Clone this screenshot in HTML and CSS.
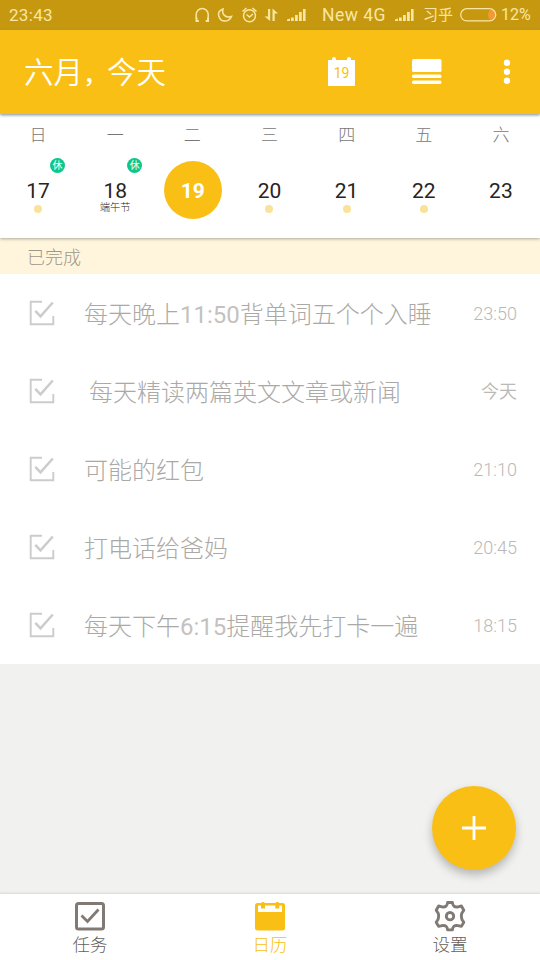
FILE: index.html
```html
<!DOCTYPE html>
<html lang="zh-CN">
<head>
<meta charset="utf-8">
<title>日历</title>
<link rel="stylesheet" href="styles.css">
</head>
<body>
<svg class="defs" width="0" height="0" aria-hidden="true">
  <symbol id="signal" viewBox="0 0 19 14"><path d="M0 13v-1.500l3-1V13zM4 9.500h2.800V13H4zM8 7h2.800v6H8zM12 4h2.800v9H12zM16 1h2.600v12H16z"/></symbol>
  <symbol id="done" viewBox="0 0 26 26"><path d="M13 1.700H1.700v22.600h22.600V16" fill="none" stroke-width="1.900"/><path d="M6.300 10.800l5.200 5.600L23.800 2.500" fill="none" stroke-width="2.500"/></symbol>
</svg>
<div class="app">
  <div class="status">
    <span class="clock">23:43</span>
    <svg class="status-icons" viewBox="0 0 94 18">
      <g fill="none" stroke="#f9e6a4" stroke-width="1.500">
        <path d="M3.200 12.500V8.500a6 6 0 0 1 12 0v4"/>
        <path d="M3.500 11.500v3.500h2.300M15 11.500v3.500h-2.300" stroke-width="2"/>
        <path d="M30 3c-8 3-4 12.500 2.500 12 3-.3 5-2 6-4.500-6 2-10-2.500-8.500-7.500z"/>
        <circle cx="56.500" cy="9.700" r="6"/><path d="M53.500 8.500l3 2.500 3.500-3M49.500 5.500l4-3.500M63.500 5.500l-4-3.500"/>
      </g>
      <path fill="#f9e6a4" d="M75 3h2.200v12L71.500 10.500H75zM79.500 15V2.500l5.500 5h-3.300V15z"/>
    </svg>
    <svg class="bars"><use href="#signal"/></svg>
    <span class="network">New 4G</span>
    <svg class="bars"><use href="#signal"/></svg>
    <span class="carrier">习乎</span>
    <svg class="battery" viewBox="0 0 37 14"><path fill="#f39a36" d="M30 2h1.500a5 5 0 0 1 0 10H30a8 8 0 0 1 0-10z"/><rect x=".7" y=".7" width="35" height="12.200" rx="6.100" fill="none" stroke="#f9e6a4" stroke-width="1.200"/></svg>
    <span class="percent">12%</span>
  </div>
  <header class="header">
    <h1>六月<span class="comma">，</span>今天</h1>
    <div class="today"><span>19</span></div>
    <svg class="view" viewBox="0 0 30 26" fill="#fff"><rect width="29.500" height="13" rx="1.500"/><rect y="15.500" width="29.500" height="3.500" rx="1.500"/><rect y="21.500" width="29.500" height="3.500" rx="1.500"/></svg>
    <svg class="more" viewBox="0 0 8 26" fill="#fff"><circle cx="4" cy="3.800" r="3.200"/><circle cx="4" cy="12.800" r="3.200"/><circle cx="4" cy="21.800" r="3.200"/></svg>
  </header>
  <section class="week">
    <div class="day"><span class="name">日</span><span class="date">17<i class="rest">休</i></span><i class="dot"></i></div>
    <div class="day"><span class="name">一</span><span class="date">18<i class="rest">休</i></span><span class="festival">端午节</span></div>
    <div class="day"><span class="name">二</span><span class="date selected">19</span></div>
    <div class="day"><span class="name">三</span><span class="date">20</span><i class="dot"></i></div>
    <div class="day"><span class="name">四</span><span class="date">21</span><i class="dot"></i></div>
    <div class="day"><span class="name">五</span><span class="date">22</span><i class="dot"></i></div>
    <div class="day"><span class="name">六</span><span class="date">23</span></div>
  </section>
  <h2 class="section">已完成</h2>
  <ul class="tasks">
    <li><svg class="check"><use href="#done"/></svg><span class="title">每天晚上<b>11:50</b>背单词五个个入睡</span><span class="time">23:50</span></li>
    <li><svg class="check"><use href="#done"/></svg><span class="title spaced">每天精读两篇英文文章或新闻</span><span class="time">今天</span></li>
    <li><svg class="check"><use href="#done"/></svg><span class="title">可能的红包</span><span class="time">21:10</span></li>
    <li><svg class="check"><use href="#done"/></svg><span class="title">打电话给爸妈</span><span class="time">20:45</span></li>
    <li><svg class="check"><use href="#done"/></svg><span class="title">每天下午<b>6:15</b>提醒我先打卡一遍</span><span class="time">18:15</span></li>
  </ul>
  <button class="add" aria-label="添加"><svg viewBox="0 0 24 24"><path d="M12 0v24M0 12h24" stroke="#fff" stroke-width="2.800"/></svg></button>
  <nav class="nav">
    <a><svg viewBox="0 0 32 32" fill="none" stroke="#817a74"><rect x="2.500" y="3.500" width="27" height="25.500" rx="2" stroke-width="3"/><path d="M7.500 15.500l6 6L24.500 9.500" stroke-width="2.800"/></svg><span>任务</span></a>
    <a class="active"><svg viewBox="0 0 32 32"><rect x="1" y="3" width="30" height="27.500" rx="2.500" fill="#f9bf15"/><path d="M4 5.500h3v3h4v-3h10.300v3h4v-3H28V12H4z" fill="#fff"/><path d="M7.700 2h2.600v5.500H7.700zM22 2h2.600v5.500H22z" fill="#f9bf15"/></svg><span>日历</span></a>
    <a><svg viewBox="0 0 32 32" fill="none" stroke="#817a74" stroke-width="2.900" stroke-linejoin="round"><path d="M13.600 2.500h4.800c.3 3.500 2.300 5 5.600 4.300l3.400-.8 2.400 4.200c-3.300 3.500-3.300 8.500 0 12l-2.400 4.200-3.400-.8c-3.300-.7-5.300.8-5.600 4.300h-4.800c-.3-3.500-2.300-5-5.600-4.300l-3.400.8-2.400-4.200c3.300-3.500 3.300-8.500 0-12L4.600 6l3.400.8c3.300.7 5.300-.8 5.600-4.300z"/><circle cx="16" cy="16.200" r="3.700"/></svg><span>设置</span></a>
  </nav>
</div>
</body>
</html>
```

FILE: styles.css
```css
* { box-sizing: border-box; }
body { margin: 0; font-family: Roboto, "Noto Sans CJK SC", sans-serif; }
h1, h2, ul { margin: 0; padding: 0; font-weight: 300; }
i { font-style: normal; }
svg { display: block; flex: none; }
.defs { position: absolute; }
.app { width: 540px; height: 960px; display: flex; flex-direction: column; background: #f1f1ef; overflow: hidden; position: relative; }
.app > * { flex: none; }

.status { height: 30px; display: flex; align-items: center; padding: 0 9px; background: #c6980f; color: #f9e6a4; font-size: 17px; line-height: 30px; white-space: nowrap; }
.status .clock { width: 184px; letter-spacing: .3px; }
.status-icons { width: 94px; height: 18px; }
.bars { width: 19px; height: 14px; fill: #f9e6a4; }
.network { width: 73px; margin-left: 16px; font-size: 17.500px; letter-spacing: .5px; }
.carrier { width: 37px; margin-left: 9px; font-size: 15px; font-weight: 400; }
.battery { width: 37px; height: 14px; }
.percent { margin-left: 4px; font-size: 16px; }

.header { height: 84px; display: flex; align-items: center; padding: 0 29px 0 24px; background: #f9bf15; color: #fff; box-shadow: 0 1px 3px #789; z-index: 1; }
.header h1 { width: 304px; padding-top: 3px; font-size: 29.500px; font-weight: 350; line-height: 84px; white-space: nowrap; }
.comma { font-size: 24px; font-weight: 500; }
.today { width: 27px; height: 26px; margin-top: 2px; background: #fff; color: #f9bf15; font-size: 14px; line-height: 27px; text-align: center; position: relative; }
.today::before, .today::after { content: ""; position: absolute; top: -3px; width: 4px; height: 5px; border-radius: 2px; background: #fff; }
.today::before { left: 4px; }
.today::after { right: 4px; }
.view { width: 30px; height: 26px; margin: 0 auto 0 57px; }
.more { width: 8px; height: 26px; }

.week { height: 124px; display: grid; grid-template-columns: repeat(7, 1fr); background: #fff; box-shadow: 0 1px 3px #aa9; z-index: 0; position: relative; }
.day { display: flex; flex-direction: column; align-items: center; padding: 8px 1px 0 0; }
.name { height: 26px; font-size: 17px; font-weight: 300; line-height: 26px; color: #777; }
.date { width: 58px; height: 22px; margin-top: 32px; font-size: 21px; line-height: 22px; text-align: center; color: #28241f; position: relative; }
.selected { height: 58px; margin: 13px 0 0 1px; border-radius: 50%; line-height: 60px; background: #f9bf15; color: #fff; font-weight: 700; }
.rest { position: absolute; left: 41px; top: -22px; width: 15px; height: 15px; border-radius: 50%; background: #0dc78a; color: #fff; font-size: 10px; line-height: 15px; }
.dot { width: 8px; height: 8px; margin-top: 3px; border-radius: 50%; background: #fbe29a; }
.festival { height: 12px; font-size: 10.300px; font-weight: 300; line-height: 12px; color: #222; }

.section { height: 36px; padding: 1px 0 0 27px; background: #fff5dd; color: #9f9887; font-size: 18px; line-height: 37px; }
.tasks { height: 390px; background: #fff; list-style: none; }
.tasks li { height: 78px; display: flex; align-items: center; padding: 0 23px 0 29px; }
.check { width: 26px; height: 26px; stroke: #ccc; }
.title { flex: 1; margin-left: 29px; font-size: 24px; line-height: 78px; padding-top: 4px; font-weight: 300; color: #aba9a6; white-space: nowrap; }
.title b { font-weight: 400; color: #c4c2c0; }
.spaced { padding-left: 5px; }
.time { font-size: 18px; line-height: 78px; padding-top: 2px; font-weight: 350; color: #bbb9b6; }

.add { position: absolute; left: 432px; top: 786px; width: 84px; height: 84px; padding: 30px; border: 0; border-radius: 50%; background: #f9bf15; box-shadow: 0 5px 10px rgba(0,0,0,.25); }
.add svg { width: 24px; height: 24px; }
.nav { height: 66px; margin-top: auto; display: grid; grid-template-columns: repeat(3, 1fr); background: #fff; box-shadow: 0 -1px 2px #d8d8d6; }
.nav a { display: flex; flex-direction: column; align-items: center; padding-top: 6px; color: #665f59; font-size: 17.500px; font-weight: 300; line-height: 26px; }
.nav svg { width: 32px; height: 32px; }
.nav .active { color: #f9bf15; }
```
